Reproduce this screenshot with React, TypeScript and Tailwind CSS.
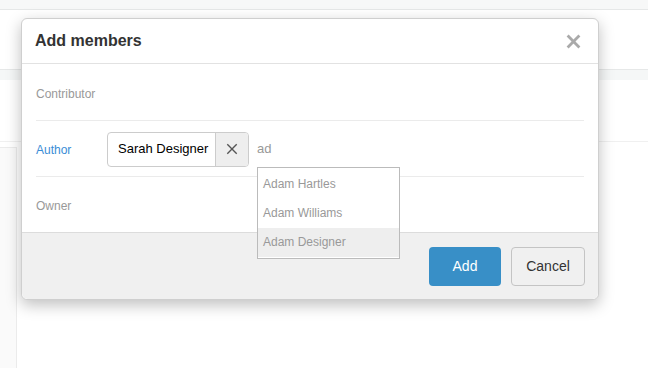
import React, { useState } from 'react';

const suggestions = ['Adam Hartles', 'Adam Williams', 'Adam Designer'];

function CloseIcon({ size, color, width }: { size: number; color: string; width: number }) {
  return (
    <svg width={size} height={size} viewBox="0 0 14 14" fill="none">
      <path d="M1.5 1.5L12.5 12.5M12.5 1.5L1.5 12.5" stroke={color} strokeWidth={width} strokeLinecap="butt" />
    </svg>
  );
}

export default function App() {
  const [query] = useState('ad');
  const [active] = useState(2);

  return (
    <div className="relative w-[648px] h-[368px] overflow-hidden bg-white font-['Liberation_Sans',Arial,sans-serif]">
      {/* Page behind the dialog */}
      <div className="h-[10px] bg-[#f7f8f8] border-b border-[#e6e8e8]" />
      <div className="h-[59px]" />
      <div className="h-[11px] bg-[#f5f7f7] border-t border-[#e6e8e8]" />
      <div className="h-[61px]" />
      <div className="border-t border-[#f0f0f0]" />
      <div className="flex pt-[5px]">
        <div className="w-[17px] h-[230px] bg-[#fafafa] border-t border-r border-[#ebebeb]" />
      </div>

      {/* Dialog */}
      <div className="absolute left-[21px] top-[18px] w-[578px] bg-white rounded-[6px] border border-[#cfcfcf] shadow-[0_5px_15px_rgba(0,0,0,0.25)]">
        <div className="h-[45px] px-[13px] flex items-center justify-between border-b border-[#e2e2e2]">
          <h2 className="text-[16px] font-bold text-[#333]">Add members</h2>
          <button className="mr-[4px] mt-[1px]">
            <CloseIcon size={15} color="#aaa" width={2.6} />
          </button>
        </div>

        <div className="px-[14px]">
          <div className="h-[57px] flex items-center border-b border-[#ebebeb]">
            <span className="w-[71px] pt-[3px] text-[12px] text-[#999]">Contributor</span>
          </div>

          <div className="h-[56px] flex items-center border-b border-[#ebebeb]">
            <span className="w-[71px] pt-[2px] text-[12px] text-[#3a8dd6]">Author</span>
            <div className="flex h-[35px] mt-[1px] rounded-[4px] border border-[#cccccc] overflow-hidden">
              <span className="w-[107px] flex items-center pl-[10px] text-[13px] text-black">Sarah Designer</span>
              <button className="w-[33px] flex items-center justify-center bg-[#eeeeee] border-l border-[#cccccc]">
                <CloseIcon size={12} color="#555" width={1.6} />
              </button>
            </div>
            <div className="relative ml-[8px] h-[35px] mt-[1px] flex items-center">
              <span className="text-[13px] text-[#999]">{query}</span>
              <ul className="absolute left-0 top-[35px] w-[143px] bg-white border border-[#bbbbbb] pt-[2px] pb-[1px] z-10">
                {suggestions.map((name, i) => (
                  <li
                    key={name}
                    className={`h-[29px] flex items-center px-[5px] text-[12px] text-[#999] ${
                      i === active ? 'bg-[#eeeeee]' : ''
                    }`}
                  >
                    {name}
                  </li>
                ))}
              </ul>
            </div>
          </div>

          <div className="h-[55px] flex items-center">
            <span className="w-[71px] pt-[2px] text-[12px] text-[#999]">Owner</span>
          </div>
        </div>

        <div className="h-[67px] flex items-center justify-end gap-[10px] pr-[13px] bg-[#f0f0f0] border-t border-[#dcdcdc] rounded-b-[6px]">
          <button className="w-[72px] h-[39px] mt-[1px] rounded-[4px] bg-[#388fc7] text-white text-[14px]">Add</button>
          <button className="w-[74px] h-[39px] mt-[1px] rounded-[4px] border border-[#c4c4c4] bg-[#f0f0f0] text-[#333] text-[14px]">
            Cancel
          </button>
        </div>
      </div>
    </div>
  );
}
